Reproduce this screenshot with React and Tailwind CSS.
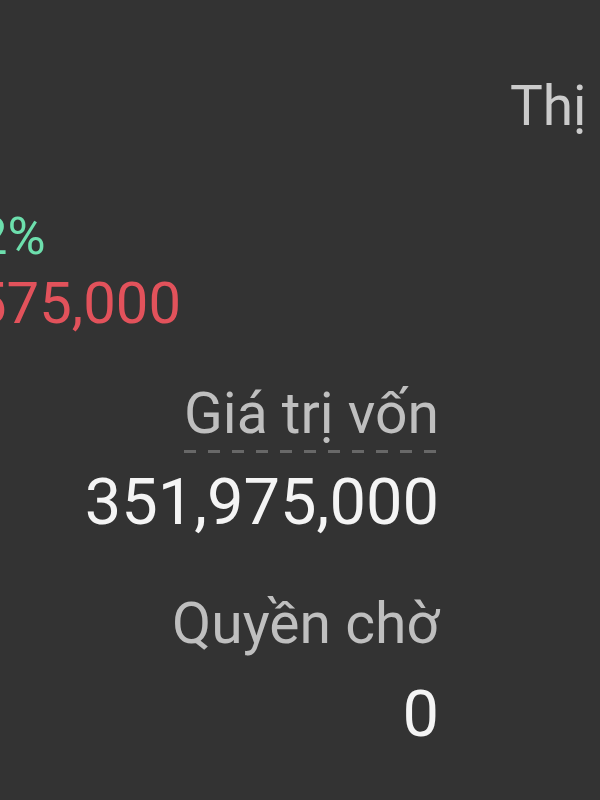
import React from "react";

const App = () => {
  return (
    <div className="w-[600px] h-[800px] overflow-hidden bg-[#333333] font-['Roboto',sans-serif]">
      {/* top header, only the start of it fits */}
      <div className="pt-[79px] pl-[510px] whitespace-nowrap text-[55px] leading-none text-[#cbcbcb]">
        Thị trường
      </div>

      <div className="flex w-[439px]">
        {/* left column: profit / loss */}
        <div className="w-0 shrink-0 flex flex-col items-start -ml-[94px] whitespace-nowrap">
          <div className="mt-[77px] text-[52px] leading-none text-[#6ddfad]">
            1.22%
          </div>
          <div className="mt-[11px] ml-[24px] text-[58px] leading-none text-[#e2525b]">
            1,575,000
          </div>
        </div>

        {/* right column: capital value */}
        <div className="flex-1 ml-[94px] flex flex-col items-end whitespace-nowrap">
          <div className="mt-[251px] flex flex-col">
            <div className="text-[57px] leading-none text-[#bfbfbf]">
              Giá trị vốn
            </div>
            <div className="mt-[8px] h-[3px] w-full bg-[repeating-linear-gradient(to_right,#686868_0_12px,transparent_12px_24px)]" />
          </div>
          <div className="mt-[17px] text-[65px] leading-none text-[#f4f4f4]">
            351,975,000
          </div>
          <div className="mt-[60px] text-[57px] leading-none text-[#bfbfbf]">
            Quyền chờ
          </div>
          <div className="mt-[30px] text-[65px] leading-none text-[#f4f4f4]">
            0
          </div>
        </div>
      </div>
    </div>
  );
};

export default App;
